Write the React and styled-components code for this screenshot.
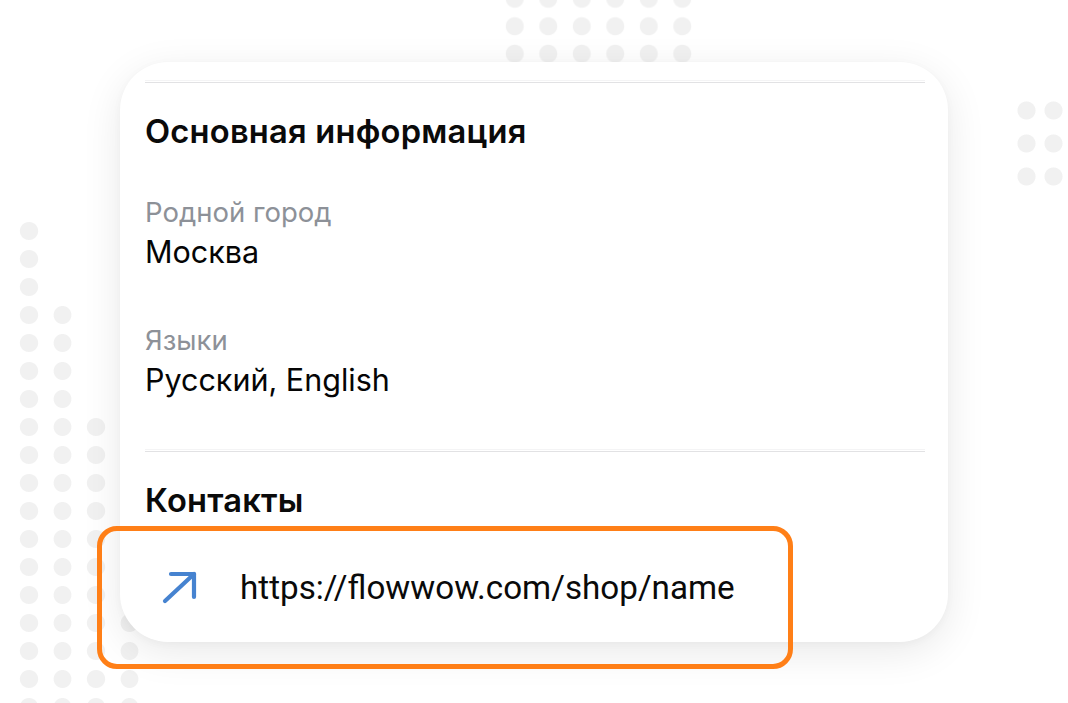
import React from 'react';
import styled, { createGlobalStyle } from 'styled-components';

const GlobalStyle = createGlobalStyle`
    html, body {
        margin: 0;
        padding: 0;
        background: #ffffff;
    }
    body {
        font-family: Inter, "Noto Sans", sans-serif;
        -webkit-font-smoothing: antialiased;
    }
`;

const Page = styled.div`
    position: relative;
    width: 1068px;
    height: 703px;
    overflow: hidden;
    background: #ffffff;
    padding: 62px 0 0 120px;
    box-sizing: border-box;
`;

// decorative dot fields behind the card
const DotGrid = styled.div`
    position: absolute;
    left: ${p => p.$x - p.$dx / 2}px;
    top: ${p => p.$y - p.$dy / 2}px;
    width: ${p => p.$cols * p.$dx}px;
    height: ${p => p.$rows * p.$dy}px;
    background-image: radial-gradient(circle at center, #f1f1f1 8.5px, rgba(241,241,241,0) 9.5px);
    background-size: ${p => p.$dx}px ${p => p.$dy}px;
    z-index: 0;
`;

const Card = styled.div`
    position: relative;
    z-index: 1;
    width: 828px;
    height: 580px;
    box-sizing: border-box;
    padding: 20px 23px 0 25px;
    background: #ffffff;
    border-radius: 48px;
    box-shadow: 0 10px 40px rgba(0, 0, 0, 0.09), 0 2px 8px rgba(0, 0, 0, 0.03);
    display: flex;
    flex-direction: column;
`;

const Divider = styled.div`
    height: 1px;
    background: #e2e2e4;
    box-shadow: 0 -2px 0 #f4f4f5;
    margin-top: ${p => p.$before || 0}px;
    margin-bottom: ${p => p.$after}px;
`;

const SectionTitle = styled.h2`
    margin: 0;
    font-size: 32.7px;
    line-height: 40px;
    font-weight: 600;
    color: #0a0a0a;
    letter-spacing: 0.2px;
`;

const Field = styled.div`
    display: flex;
    flex-direction: column;
    gap: 4px;
    margin-top: ${p => p.$top}px;
`;

const Label = styled.div`
    font-size: 27.5px;
    line-height: 36px;
    color: #8d9198;
`;

const Value = styled.div`
    font-size: 30.5px;
    line-height: 36px;
    color: #050505;
`;

const LinkRow = styled.div`
    display: flex;
    align-items: center;
    height: 64px;
    margin-top: 36px;
    padding-left: 16px;
    gap: 41px;
`;

const LinkText = styled.span`
    font-family: Roboto, "Liberation Sans", sans-serif;
    font-size: 33.2px;
    line-height: 40px;
    color: #0a0a0a;
`;

const Highlight = styled.div`
    position: absolute;
    z-index: 2;
    left: 97px;
    top: 526px;
    width: 696px;
    height: 143px;
    box-sizing: border-box;
    border: 5px solid #ff7f17;
    border-radius: 20px;
    pointer-events: none;
`;

const ArrowIcon = () => (
    <svg width="38" height="36" viewBox="0 0 38 36" fill="none">
        <path d="M4 31 L33 4" stroke="#4683d0" strokeWidth="4.2" strokeLinecap="round" />
        <path d="M10 4 H33 V27" stroke="#4683d0" strokeWidth="4.2" strokeLinecap="round" strokeLinejoin="round" />
    </svg>
);

const App = () => {
    return (
        <Page>
            <GlobalStyle />
            <DotGrid $x={515} $y={-1} $cols={6} $rows={3} $dx={33.5} $dy={27.5} />
            <DotGrid $x={1026} $y={110} $cols={2} $rows={3} $dx={27} $dy={33} />
            <DotGrid $x={29} $y={231} $cols={1} $rows={18} $dx={33.5} $dy={28} />
            <DotGrid $x={62.5} $y={315} $cols={1} $rows={15} $dx={33.5} $dy={28} />
            <DotGrid $x={96} $y={427} $cols={1} $rows={11} $dx={33.5} $dy={28} />
            <DotGrid $x={129.5} $y={455} $cols={1} $rows={10} $dx={33.5} $dy={28} />

            <Card>
                <Divider $after={28} />
                <SectionTitle>Основная информация</SectionTitle>
                <Field $top={43}>
                    <Label>Родной город</Label>
                    <Value>Москва</Value>
                </Field>
                <Field $top={52}>
                    <Label>Языки</Label>
                    <Value>Русский, English</Value>
                </Field>
                <Divider $before={53} $after={28} />
                <SectionTitle>Контакты</SectionTitle>
                <LinkRow>
                    <ArrowIcon />
                    <LinkText>https://flowwow.com/shop/name</LinkText>
                </LinkRow>
            </Card>

            <Highlight />
        </Page>
    );
};

export default App;
